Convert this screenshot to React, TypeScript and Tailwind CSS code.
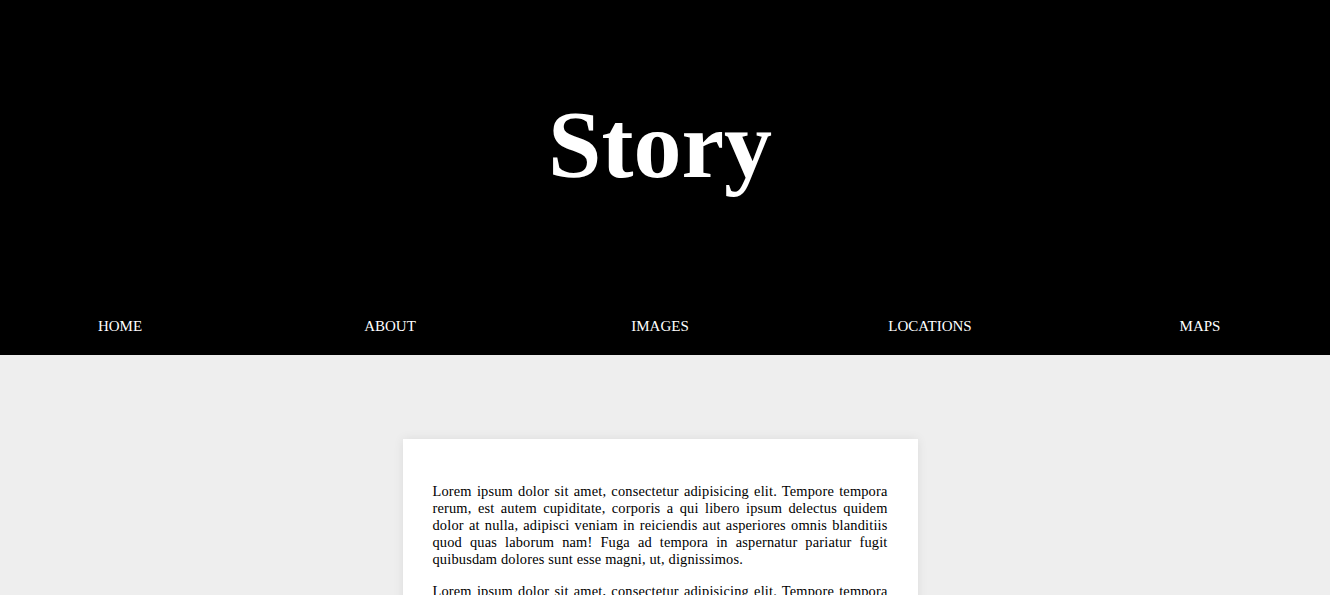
import React from 'react';

const navItems = ['HOME', 'ABOUT', 'IMAGES', 'LOCATIONS', 'MAPS'];

const lorem =
  'Lorem ipsum dolor sit amet, consectetur adipisicing elit. Tempore tempora rerum, est autem cupiditate, corporis a qui libero ipsum delectus quidem dolor at nulla, adipisci veniam in reiciendis aut asperiores omnis blanditiis quod quas laborum nam! Fuga ad tempora in aspernatur pariatur fugit quibusdam dolores sunt esse magni, ut, dignissimos.';

const App: React.FC = () => {
  return (
    <div className="min-h-screen bg-[#eeeeee] font-['Liberation_Serif','Times_New_Roman',serif]">
      <header className="bg-black h-[355px] overflow-hidden">
        <div className="pr-[10px] flex flex-col">
          <h1 className="mt-[89px] text-center text-white text-[96px] font-bold leading-[normal]">
            Story
          </h1>
          <nav className="mt-[118px] flex justify-center">
            {navItems.map(item => (
              <a
                key={item}
                href="#"
                className="w-[270px] shrink-0 text-center text-white text-[15px] leading-[normal]"
              >
                {item}
              </a>
            ))}
          </nav>
        </div>
      </header>

      <main className="pr-[10px] pt-[84px] pb-16">
        <div className="mx-auto w-[515px] bg-white p-[30px] shadow-[0_0_10px_rgba(0,0,0,0.08)]">
          {[0, 1, 2, 3].map(i => (
            <p
              key={i}
              className="my-[14.4px] text-[14.4px] leading-[normal] tracking-[0.17px] text-black text-justify"
            >
              {lorem}
            </p>
          ))}
        </div>
      </main>
    </div>
  );
};

export default App;
